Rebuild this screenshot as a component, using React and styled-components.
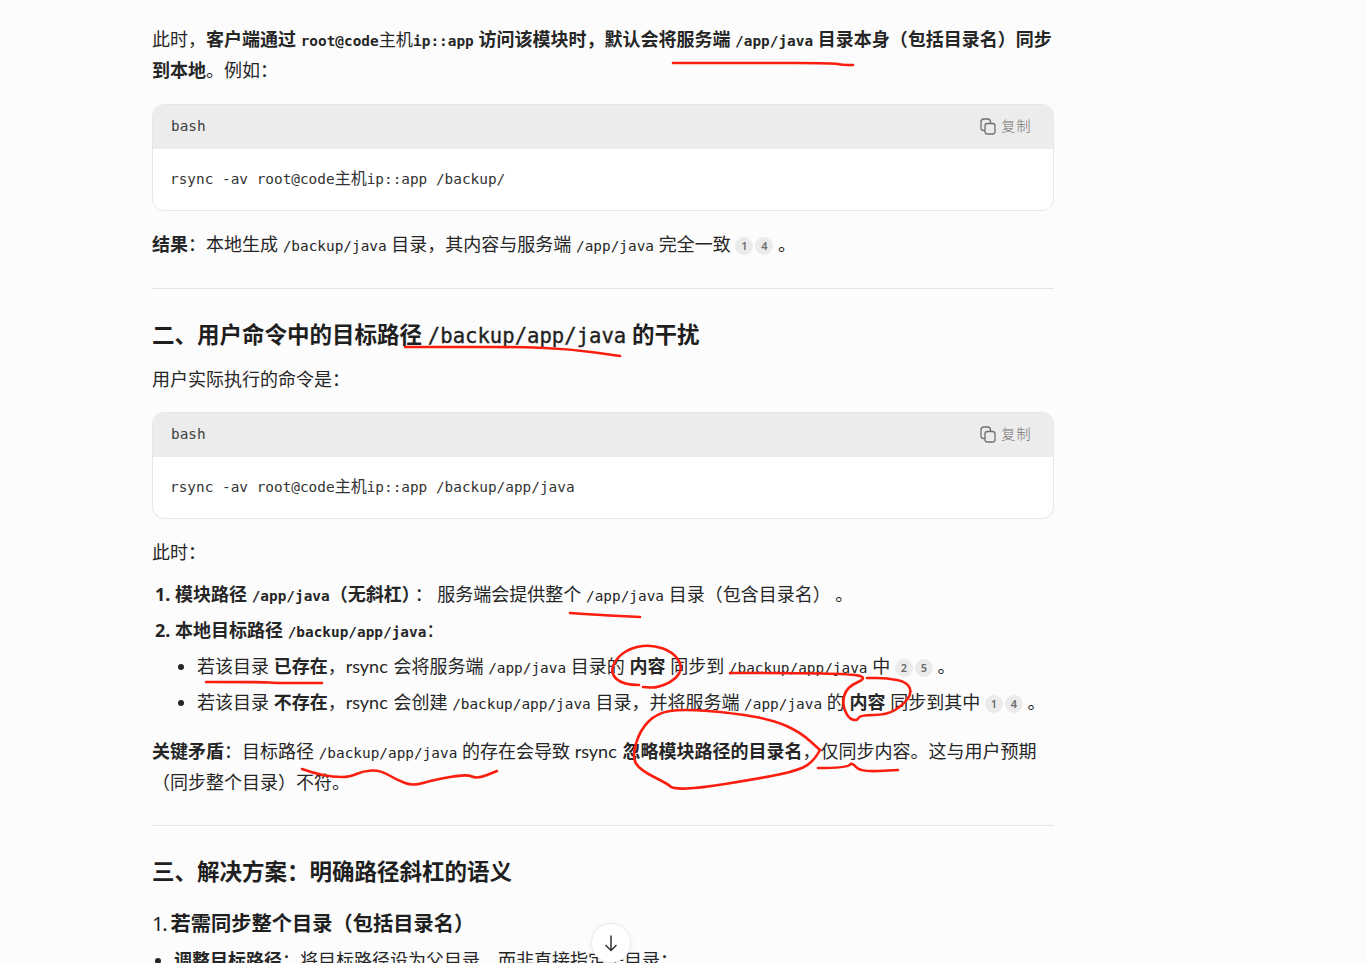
import React from "react";
import styled, { createGlobalStyle } from "styled-components";

const GlobalStyle = createGlobalStyle`
  html, body {
    margin: 0;
    height: 963px;
    overflow: hidden;
    background: #fcfcfc;
  }
`;

const Page = styled.div`
  position: relative;
  height: 963px;
  overflow: hidden;
  background: #fcfcfc;
`;

const Article = styled.main`
  width: 902px;
  margin-left: 152px;
  padding-top: 24px;
  font-family: "Noto Sans", "Noto Sans CJK SC", sans-serif;
  font-size: 18px;
  line-height: 31px;
  color: #262626;
`;

const Para = styled.p`
  margin: ${(p) => p.$top || 0}px 0 0;
`;

const Strong = styled.strong`
  font-weight: 700;
  margin-right: ${(p) => p.$gap || 0}px;
`;

const Word = styled.span`
  font-family: Lato, sans-serif;
  margin-right: 1px;
`;

const Code = styled.code`
  font-family: "DejaVu Sans Mono", "Noto Sans CJK SC", monospace;
  font-size: 14.4px;
  line-height: 1;
  font-weight: ${(p) => (p.$bold ? 700 : 400)};
`;

const CodeHan = styled.span`
  font-family: "Noto Sans CJK SC", sans-serif;
  font-size: 17.2px;
  font-weight: 400;
  line-height: 1;
`;

const CodeBlock = styled.div`
  margin-top: ${(p) => p.$top}px;
  border: 1px solid #e6e6e6;
  border-radius: 12px;
  overflow: hidden;
  background: #fff;
`;

const CodeHeader = styled.div`
  display: flex;
  align-items: center;
  justify-content: space-between;
  height: 44px;
  box-sizing: border-box;
  padding: 0 21px 2px 18px;
  background: #ececec;
  font-family: "DejaVu Sans Mono", monospace;
  font-size: 14.4px;
  line-height: 20px;
  color: #404040;
`;

const CopyButton = styled.span`
  display: flex;
  align-items: center;
  gap: 5px;
  font-family: "Noto Sans CJK SC", sans-serif;
  font-size: 14px;
  font-weight: 300;
  letter-spacing: 1.4px;
  color: #707070;
`;

const CopyLabel = styled.span`
  margin-bottom: 3px;
`;

const CodeBody = styled.pre`
  margin: 0;
  padding: 20px 17px 0;
  height: 61px;
  box-sizing: border-box;
  font-family: "DejaVu Sans Mono", monospace;
  font-size: 14.4px;
  line-height: 19px;
  color: #333;
`;

const BlockHan = styled.span`
  font-family: "Noto Sans CJK SC", sans-serif;
  font-size: 16px;
  line-height: 1;
`;

const Badge = styled.span`
  display: inline-flex;
  align-items: center;
  justify-content: center;
  width: 18px;
  height: 18px;
  margin-left: ${(p) => (p.$first ? 0 : 2)}px;
  border-radius: 50%;
  background: #ebebeb;
  font-size: 11px;
  font-weight: 600;
  line-height: 1;
  color: #6b6b6b;
  vertical-align: 1px;
`;

const Rule = styled.hr`
  margin: ${(p) => p.$top}px 0 0;
  border: 0;
  border-top: 1px solid #e5e5e5;
`;

const SectionTitle = styled.h2`
  margin: 28px 0 0;
  font-size: 22.5px;
  line-height: 36px;
  font-weight: 700;
  color: #1f1f1f;
`;

const TitleCode = styled.code`
  font-family: "DejaVu Sans Mono", monospace;
  font-size: 20.6px;
  line-height: 1;
  font-weight: 400;
  -webkit-text-stroke: 0.35px #1f1f1f;
`;

const SubTitle = styled.h3`
  margin: 18px 0 0;
  font-size: 20.25px;
  line-height: 30px;
  font-weight: 700;
  color: #1f1f1f;
`;

const SubNumber = styled.span`
  font-weight: 400;
  letter-spacing: -1.3px;
`;

const OrderedList = styled.ol`
  margin: 11px 0 0;
  padding: 0 0 0 23px;
`;

const BulletList = styled.ul`
  margin: ${(p) => p.$top || 0}px 0 0;
  padding: 0 0 0 22px;
  list-style-type: disc;
`;

const Item = styled.li`
  margin-top: 5px;
  &::marker {
    font-weight: ${(p) => (p.$boldMarker ? 700 : 400)};
  }
  &:first-child {
    margin-top: 0;
  }
`;

const Annotations = styled.svg`
  position: absolute;
  top: 0;
  left: 0;
  pointer-events: none;
`;

const ScrollButton = styled.button`
  position: absolute;
  left: 591px;
  top: 923px;
  display: flex;
  align-items: center;
  justify-content: center;
  width: 40px;
  height: 40px;
  padding: 0;
  border: 1px solid #ececec;
  border-radius: 50%;
  background: #fff;
  box-shadow: 0 1px 6px rgba(0, 0, 0, 0.06);
  color: #333;
`;

const CopyIcon = () => (
  <svg width="16" height="17" viewBox="0 0 16 17" fill="none" stroke="#707070" strokeWidth="1.3">
    <rect x="5" y="5.5" width="10" height="10.5" rx="2.5" />
    <path d="M5 12.5H3.5A2.5 2.5 0 0 1 1 10V4A3 3 0 0 1 4 1h3.5A3 3 0 0 1 10.5 4v1.5" />
  </svg>
);

const ArrowDown = () => (
  <svg width="16" height="18" viewBox="0 0 16 18" fill="none" stroke="#333" strokeWidth="1.5">
    <path d="M8 1.5v15M2.5 11l5.5 5.5 5.5-5.5" />
  </svg>
);

const Block = ({ children, top }) => (
  <CodeBlock $top={top}>
    <CodeHeader>
      bash
      <CopyButton>
        <CopyIcon />
        <CopyLabel>复制</CopyLabel>
      </CopyButton>
    </CodeHeader>
    <CodeBody>{children}</CodeBody>
  </CodeBlock>
);

// the red pen strokes somebody drew over the screenshot
const strokes = [
  [[673, 63], [760, 63], [833, 63], [842, 65], [853, 65]],
  [[405, 347], [470, 347], [520, 347], [570, 349], [620, 356]],
  [[570, 613], [600, 615], [640, 617]],
  [[206, 682], [267, 682], [272, 683], [322, 683]],
  [[302, 769], [313, 773], [333, 777], [350, 777], [363, 771], [380, 770], [397, 780], [413, 786], [433, 780], [467, 774], [477, 779], [497, 771]],
  [[639, 685], [623, 685], [610, 673], [617, 657], [633, 647], [653, 645], [673, 652], [683, 667], [675, 680], [657, 688], [643, 687]],
  [[730, 673], [790, 673], [853, 674], [867, 678], [847, 687], [842, 703], [848, 718], [857, 721], [860, 715], [887, 715], [903, 705], [912, 693], [907, 682], [887, 678], [867, 678]],
  [[820, 750], [813, 763], [793, 772], [750, 780], [700, 788], [673, 789], [668, 784], [640, 770], [632, 757], [640, 730], [657, 713], [683, 709], [733, 713], [773, 720], [800, 732], [820, 750]],
  [[818, 768], [847, 768], [852, 762], [860, 772], [898, 770]],
];

const toPath = (pts) => {
  let d = `M${pts[0][0]} ${pts[0][1]}`;
  for (let i = 1; i < pts.length - 1; i++) {
    const mx = (pts[i][0] + pts[i + 1][0]) / 2;
    const my = (pts[i][1] + pts[i + 1][1]) / 2;
    d += `Q${pts[i][0]} ${pts[i][1]} ${mx} ${my}`;
  }
  const last = pts[pts.length - 1];
  return `${d}L${last[0]} ${last[1]}`;
};

const App = () => (
  <Page>
    <GlobalStyle />
    <Article>
      <Para>
        此时，<Strong>客户端通过 <Code $bold>root@code<CodeHan>主机</CodeHan>ip::app</Code> 访问该模块时，默认会将服务端 <Code $bold>/app/java</Code> 目录本身（包括目录名）同步到本地</Strong>。例如：
      </Para>
      <Block top={18}>rsync -av root@code<BlockHan>主机</BlockHan>ip::app /backup/</Block>
      <Para $top={18}>
        <Strong>结果</Strong>：本地生成 <Code>/backup/java</Code> 目录，其内容与服务端 <Code>/app/java</Code> 完全一致 <Badge $first>1</Badge><Badge>4</Badge> 。
      </Para>
      <Rule $top={28} />
      <SectionTitle>
        二、用户命令中的目标路径 <TitleCode>/backup/app/java</TitleCode> 的干扰
      </SectionTitle>
      <Para $top={11}>用户实际执行的命令是：</Para>
      <Block top={17}>rsync -av root@code<BlockHan>主机</BlockHan>ip::app /backup/app/java</Block>
      <Para $top={18}>此时：</Para>
      <OrderedList>
        <Item $boldMarker>
          <Strong $gap={4}>模块路径 <Code $bold>/app/java</Code>（无斜杠）</Strong>： 服务端会提供整个 <Code>/app/java</Code> 目录（包含目录名） 。
        </Item>
        <Item $boldMarker>
          <Strong>本地目标路径 <Code $bold>/backup/app/java</Code></Strong>：
          <BulletList $top={5}>
            <Item>
              若该目录 <Strong>已存在</Strong>，<Word>rsync</Word> 会将服务端 <Code>/app/java</Code> 目录的 <Strong>内容</Strong> 同步到 <Code>/backup/app/java</Code> 中 <Badge $first>2</Badge><Badge>5</Badge> 。
            </Item>
            <Item>
              若该目录 <Strong>不存在</Strong>，<Word>rsync</Word> 会创建 <Code>/backup/app/java</Code> 目录，并将服务端 <Code>/app/java</Code> 的 <Strong>内容</Strong> 同步到其中 <Badge $first>1</Badge><Badge>4</Badge> 。
            </Item>
          </BulletList>
        </Item>
      </OrderedList>
      <Para $top={18}>
        <Strong>关键矛盾</Strong>：目标路径 <Code>/backup/app/java</Code> 的存在会导致 <Word>rsync</Word> <Strong>忽略模块路径的目录名</Strong>，仅同步内容。这与用户预期（同步整个目录）不符。
      </Para>
      <Rule $top={27} />
      <SectionTitle>三、解决方案：明确路径斜杠的语义</SectionTitle>
      <SubTitle>
        <SubNumber>1. </SubNumber>若需同步整个目录（包括目录名）
      </SubTitle>
      <BulletList $top={7}>
        <Item>
          <Strong>调整目标路径</Strong>：将目标路径设为父目录，而非直接指定子目录：
        </Item>
      </BulletList>
    </Article>
    <Annotations width="1366" height="963" fill="none" stroke="#fb1d0e" strokeWidth="2.6" strokeLinecap="round" strokeLinejoin="round">
      {strokes.map((pts, i) => (
        <path key={i} d={toPath(pts)} />
      ))}
    </Annotations>
    <ScrollButton>
      <ArrowDown />
    </ScrollButton>
  </Page>
);

export default App;
